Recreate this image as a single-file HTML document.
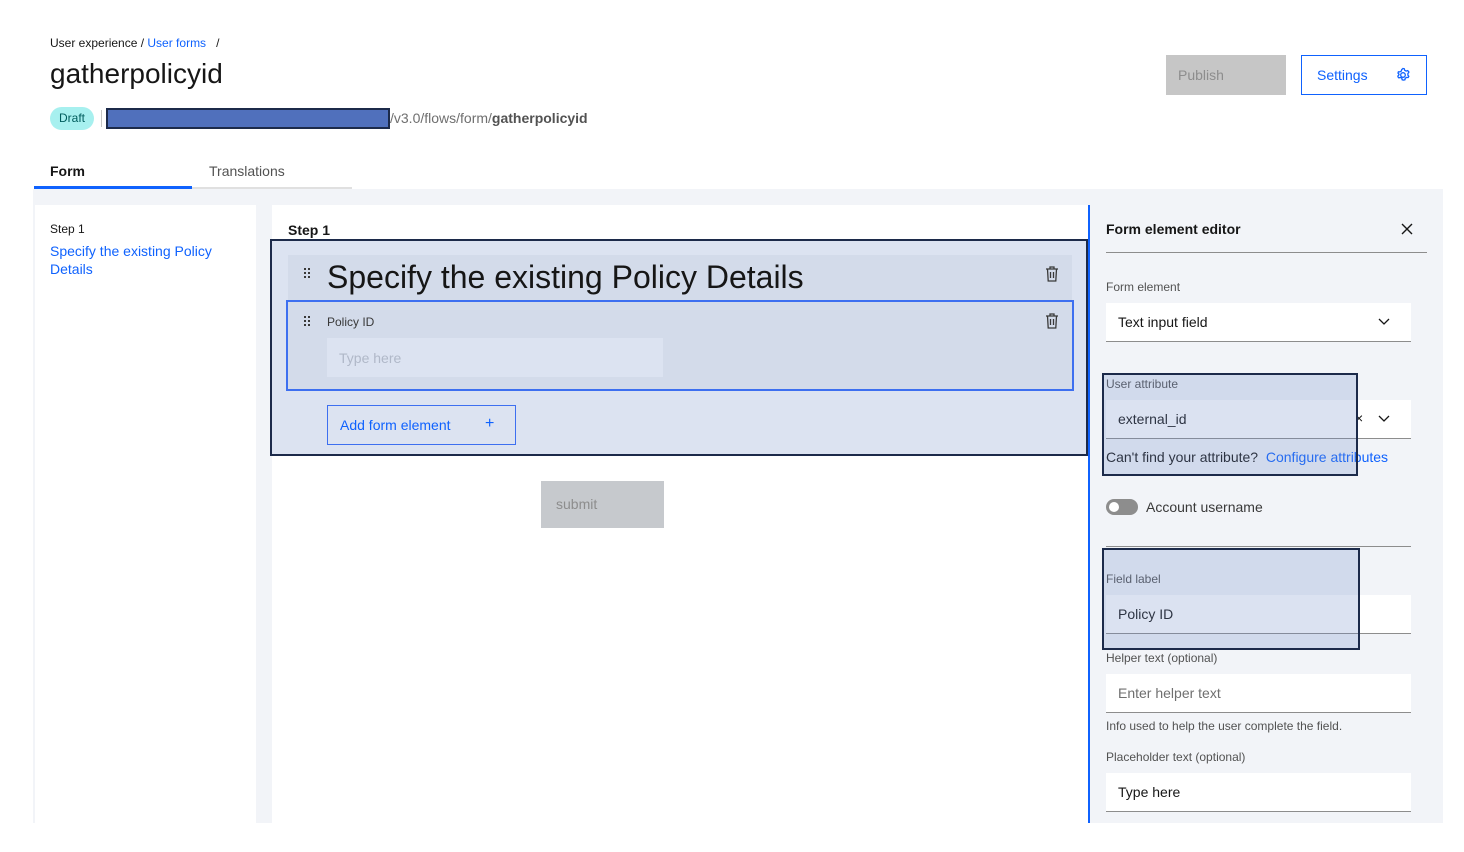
<!DOCTYPE html>
<html><head><meta charset="utf-8"><style>
*{box-sizing:border-box;margin:0;padding:0}
body{width:1464px;height:852px;background:#fff;font-family:"Liberation Sans",sans-serif;color:#161616;position:relative;overflow:hidden}
.a{position:absolute}
.lbl{font-size:12px;color:#525252}
.inp{position:absolute;background:#fff;border-bottom:1px solid #8d8d8d;font-size:14px;padding-left:12px;display:flex;align-items:center}
.ov{position:absolute;background:rgba(110,140,200,0.25);border:2px solid #1c2a4a}
</style></head><body>
<div class="a" style="left:50px;top:36px;font-size:12px;color:#161616">User experience / <span style="color:#0f62fe">User forms</span> &nbsp;&nbsp;/</div>
<div class="a" style="left:50px;top:58px;font-size:28px;color:#161616">gatherpolicyid</div>
<div class="a" style="left:50px;top:107px;width:44px;height:23px;border-radius:12px;background:#a7f0ef;font-size:12px;color:#005d5d;text-align:center;line-height:23px">Draft</div>
<div class="a" style="left:101px;top:110px;width:1px;height:17px;background:#c6c6c6"></div>
<div class="a" style="left:106px;top:108px;width:284px;height:21px;background:#5070bc;border:2px solid #1c2a4a"></div>
<div class="a" style="left:390px;top:110px;font-size:14px;color:#6f6f6f">/v3.0/flows/form/<b style="color:#525252">gatherpolicyid</b></div>
<div class="a" style="left:1166px;top:55px;width:120px;height:40px;background:#c6c6c6;color:#8d8d8d;font-size:14px;padding:12px 12px">Publish</div>
<div class="a" style="left:1301px;top:55px;width:126px;height:40px;border:1px solid #0f62fe;color:#0f62fe;font-size:14px;padding:11px 15px">Settings
<svg class="a" style="left:93px;top:11px" width="16" height="16" viewBox="0 0 16 16" fill="none" stroke="#0f62fe" stroke-width="1.3"><circle cx="8" cy="8" r="2.3"/><path d="M8 1.5l1.3.3.4 1.5 1.4.8 1.5-.5 1.1 1 .1.8-.9 1.1v1.6l.9 1.2-.6 1.2-1.5-.1-1.4.8-.4 1.6-1.4.3-1.3-.3-.4-1.6-1.4-.8-1.5.5-1-1.1.1-.9 1-1.2V7.2l-1-1.1.4-1.3 1.5.1 1.4-.8.4-1.5z"/></svg></div>
<div class="a" style="left:50px;top:163px;font-size:14px;font-weight:bold">Form</div>
<div class="a" style="left:209px;top:163px;font-size:14px;color:#525252">Translations</div>
<div class="a" style="left:34px;top:186px;width:158px;height:3px;background:#0f62fe"></div>
<div class="a" style="left:192px;top:187px;width:160px;height:2px;background:#e0e0e0"></div>
<div class="a" style="left:33px;top:189px;width:1410px;height:634px;background:#f2f4f8"></div>
<div class="a" style="left:35px;top:205px;width:221px;height:618px;background:#fff"></div>
<div class="a" style="left:50px;top:222px;font-size:12px;color:#161616">Step 1</div>
<div class="a" style="left:50px;top:242px;font-size:14px;color:#0f62fe;line-height:18px;width:180px">Specify the existing Policy Details</div>
<div class="a" style="left:272px;top:205px;width:816px;height:618px;background:#fff"></div>
<div class="a" style="left:288px;top:222px;font-size:14px;font-weight:bold">Step 1</div>
<div class="a" style="left:270px;top:239px;width:818px;height:217px;background:#dce3f1;border:2px solid #1c2a4a"></div>
<div class="a" style="left:288px;top:255px;width:784px;height:46px;background:#d3dbea"></div>
<div class="a" style="left:327px;top:259px;font-size:32px;color:#161616">Specify the existing Policy Details</div>
<div class="a" style="left:286px;top:300px;width:788px;height:91px;background:#d3dbea;border:2px solid #3d6ff0"></div>
<div class="a" style="left:327px;top:315px;font-size:12px;color:#393939">Policy ID</div>
<div class="a" style="left:327px;top:338px;width:336px;height:39px;background:#dce3f1;color:#b0b8c8;font-size:14px;padding:12px 12px">Type here</div>
<svg class="a" style="left:304px;top:268px" width="8" height="12"><g fill="#393939"><rect x="0" y="0" width="2" height="2"/><rect x="4" y="0" width="2" height="2"/><rect x="0" y="4" width="2" height="2"/><rect x="4" y="4" width="2" height="2"/><rect x="0" y="8" width="2" height="2"/><rect x="4" y="8" width="2" height="2"/></g></svg>
<svg class="a" style="left:304px;top:316px" width="8" height="12"><g fill="#393939"><rect x="0" y="0" width="2" height="2"/><rect x="4" y="0" width="2" height="2"/><rect x="0" y="4" width="2" height="2"/><rect x="4" y="4" width="2" height="2"/><rect x="0" y="8" width="2" height="2"/><rect x="4" y="8" width="2" height="2"/></g></svg>
<svg class="a" style="left:1045px;top:266px" width="14" height="16" viewBox="0 0 14 16" fill="none" stroke="#393939" stroke-width="1.3"><path d="M1 3h12M5 3V1h4v2M2.5 3l.7 12h7.6l.7-12M5.5 6v6M8.5 6v6"/></svg>
<svg class="a" style="left:1045px;top:313px" width="14" height="16" viewBox="0 0 14 16" fill="none" stroke="#393939" stroke-width="1.3"><path d="M1 3h12M5 3V1h4v2M2.5 3l.7 12h7.6l.7-12M5.5 6v6M8.5 6v6"/></svg>
<div class="a" style="left:327px;top:405px;width:189px;height:40px;border:1px solid #3d6ff0;color:#0f62fe;font-size:14px;padding:11px 12px">Add form element<span class="a" style="left:157px;top:9px;font-size:16px">+</span></div>
<div class="a" style="left:541px;top:481px;width:123px;height:47px;background:#c6c9cd;color:#8d8d8d;font-size:14px;padding:15px 15px">submit</div>
<div class="a" style="left:1088px;top:205px;width:2px;height:618px;background:#0f62fe"></div>
<div class="a" style="left:1106px;top:221px;font-size:14px;font-weight:bold">Form element editor</div>
<svg class="a" style="left:1401px;top:223px" width="12" height="12" stroke="#161616" stroke-width="1.4"><path d="M1 1l10 10M11 1L1 11"/></svg>
<div class="a" style="left:1106px;top:252px;width:321px;height:1px;background:#8d8d8d"></div>
<div class="a lbl" style="left:1106px;top:280px">Form element</div>
<div class="inp" style="left:1106px;top:303px;width:305px;height:39px">Text input field</div>
<svg class="a" style="left:1378px;top:318px" width="12" height="8" fill="none" stroke="#161616" stroke-width="1.3"><path d="M1 1l5 5 5-5"/></svg>
<div class="a lbl" style="left:1106px;top:377px">User attribute</div>
<div class="inp" style="left:1106px;top:400px;width:305px;height:39px">external_id</div>
<div class="a" style="left:1355px;top:410px;font-size:14px">×</div>
<svg class="a" style="left:1378px;top:415px" width="12" height="8" fill="none" stroke="#161616" stroke-width="1.3"><path d="M1 1l5 5 5-5"/></svg>
<div class="a" style="left:1106px;top:449px;font-size:14px">Can't find your attribute? <span style="color:#0f62fe">&nbsp;Configure attributes</span></div>
<div class="a" style="left:1106px;top:499px;width:32px;height:16px;border-radius:8px;background:#8d8d8d"><div class="a" style="left:3px;top:3px;width:10px;height:10px;border-radius:5px;background:#fff"></div></div>
<div class="a" style="left:1146px;top:499px;font-size:14px;color:#393939">Account username</div>
<div class="a" style="left:1106px;top:546px;width:305px;height:1px;background:#8d8d8d"></div>
<div class="a lbl" style="left:1106px;top:572px">Field label</div>
<div class="inp" style="left:1106px;top:595px;width:305px;height:39px">Policy ID</div>
<div class="a lbl" style="left:1106px;top:651px">Helper text (optional)</div>
<div class="inp" style="left:1106px;top:674px;width:305px;height:39px;color:#6f6f6f">Enter helper text</div>
<div class="a lbl" style="left:1106px;top:719px">Info used to help the user complete the field.</div>
<div class="a lbl" style="left:1106px;top:750px">Placeholder text (optional)</div>
<div class="inp" style="left:1106px;top:773px;width:305px;height:39px">Type here</div>
<div class="ov" style="left:1102px;top:373px;width:256px;height:103px"></div>
<div class="ov" style="left:1102px;top:548px;width:258px;height:102px"></div>
</body></html>
